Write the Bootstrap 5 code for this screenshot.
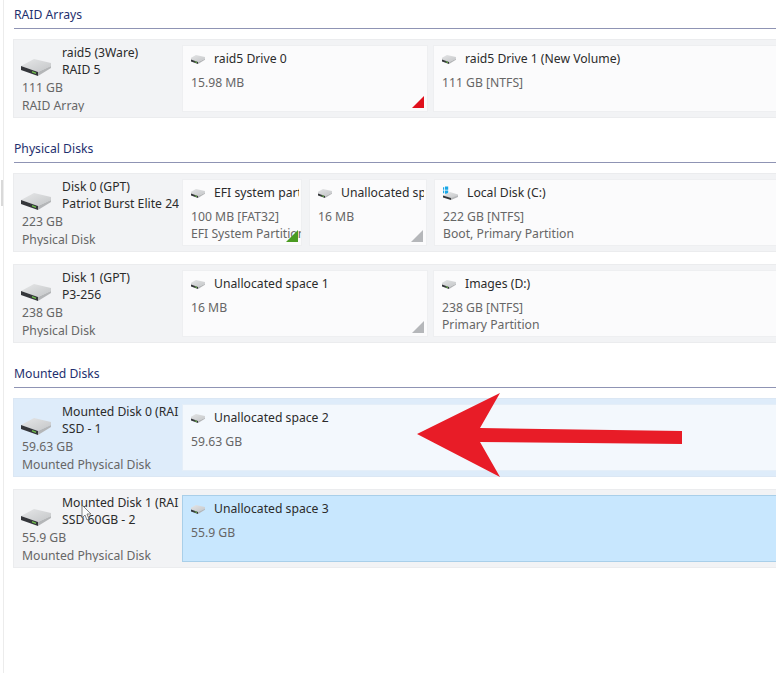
<!DOCTYPE html>
<html lang="en">
<head>
    <meta charset="UTF-8">
    <meta name="viewport" content="width=device-width, initial-scale=1.0">
    <title>Disk Management</title>
    <link href="https://cdn.jsdelivr.net/npm/bootstrap@5.3.0/dist/css/bootstrap.min.css" rel="stylesheet">
    <style>
        html, body { height: 100%; overflow: hidden; }
        body {
            background-color: #fff;
            font-family: "Noto Sans", "Open Sans", sans-serif;
            font-size: 12.2px;
            line-height: 17.5px;
            color: #2b2b2b;
        }
        .page-wrap {
            position: relative;
            min-height: 673px;
            margin-left: 3px;
            padding: 5px 0 0 9px;
            border-left: 1px solid #ececec;
        }
        .side-tab {
            position: absolute;
            left: -3px;
            top: 180px;
            width: 2px;
            height: 26px;
            background: #d9d9d9;
        }
        .sec-head {
            height: 24px;
            padding-top: 1px;
            margin-bottom: 10px;
            margin-left: 1px;
            color: #1e2f6e;
            border-bottom: 1px solid #8f94b4;
        }
        .sec-block { margin-bottom: 21px; }
        .sec-gap { margin-top: 21px; }
        .disk-row {
            height: 79px;
            margin-bottom: 12px;
            padding: 5px 0;
            background: #f2f3f5;
            border: 1px solid #ebecee;
            border-right: 0;
        }
        .disk-row.is-hover { background: #deecfa; border-color: #dbe7f4; }
        .disk-info { width: 165px; margin-right: 3px; flex: none; overflow: hidden; white-space: nowrap; }
        .info-top { height: 35px; margin-top: -1px; line-height: 17px; }
        .info-icon { width: 48px; flex: none; padding: 14px 0 0 7px; }
        .info-sub { padding-left: 8px; color: #666; }
        .tile {
            position: relative;
            flex: none;
            overflow: hidden;
            white-space: nowrap;
            background: #fbfbfc;
            border: 1px solid #eeeff1;
            padding: 1px 0 0 8px;
        }
        .tile.w-half { width: 246px; }
        .tile.w-half2 { width: 118px; }
        .tile.w-narrow { width: 120px; }
        .tile.w-rest { flex: 1 1 auto; border-right: 0; }
        .tile.is-hover { background: #f3f8fd; border-color: #e4eef8; }
        .tile.is-picked { background: #c8e7fe; border-color: #a9cfe9; }
        .tile-name { height: 24px; margin-bottom: 3px; margin-right: 2px; overflow: hidden; }
        .tile-name svg { margin-left: -2px; margin-right: 9px; flex: none; }
        .tile-name svg.win-icon { margin-right: 8px; }
        .tile-sub { color: #666; line-height: 17px; }
        .tiles-five { gap: 5px; }
        .tiles-seven { gap: 7px; }
        .corner { position: absolute; right: 3px; bottom: 3px; width: 12px; height: 12px; clip-path: polygon(100% 0, 100% 100%, 0 100%); }
        .corner-red { background: #e0101c; }
        .corner-green { background: #4b9b22; }
        .corner-grey { background: #b5b7ba; }
        .red-arrow { position: absolute; left: 413px; top: 393px; }
        .mouse-ptr { position: absolute; left: 77px; top: 504px; }
    </style>
</head>
<body>

<svg width="0" height="0" class="d-block position-absolute">
    <defs>
        <linearGradient id="hddTop" x1="0" y1="0" x2="1" y2="1">
            <stop offset="0" stop-color="#e6e7e8"/>
            <stop offset="1" stop-color="#c4c6c8"/>
        </linearGradient>
        <symbol id="hdd" viewBox="0 0 30 17">
            <path d="M0 7 L13 0 L30 4 L30 7 L17 13 Z" fill="url(#hddTop)"/>
            <path d="M0 7 L17 13 L17 17 L0 11 Z" fill="#34363a"/>
            <path d="M17 13 L30 7 L30 9 L17 17 Z" fill="#b4b6b8"/>
            <path d="M11 12 L15 13.4 L15 15 L11 13.6 Z" fill="#6dbb4a"/>
        </symbol>
    </defs>
</svg>

<div class="page-wrap">
    <div class="side-tab"></div>

    <section class="sec-block">
        <div class="sec-head">RAID Arrays</div>
        <div class="disk-row d-flex">
            <div class="disk-info">
                <div class="info-top d-flex">
                    <div class="info-icon"><svg width="30" height="17"><use href="#hdd"/></svg></div>
                    <div>raid5 (3Ware)<br>RAID 5</div>
                </div>
                <div class="info-sub">111 GB<br>RAID Array</div>
            </div>
            <div class="d-flex flex-grow-1 tiles-five">
                <div class="tile w-half">
                    <div class="tile-name d-flex align-items-center"><svg width="16" height="9"><use href="#hdd"/></svg>raid5 Drive 0</div>
                    <div class="tile-sub">15.98 MB</div>
                    <div class="corner corner-red"></div>
                </div>
                <div class="tile w-rest">
                    <div class="tile-name d-flex align-items-center"><svg width="16" height="9"><use href="#hdd"/></svg>raid5 Drive 1 (New Volume)</div>
                    <div class="tile-sub">111 GB [NTFS]</div>
                </div>
            </div>
        </div>
    </section>

    <section>
        <div class="sec-head">Physical Disks</div>
        <div class="disk-row d-flex">
            <div class="disk-info">
                <div class="info-top d-flex">
                    <div class="info-icon"><svg width="30" height="17"><use href="#hdd"/></svg></div>
                    <div>Disk 0 (GPT)<br>Patriot Burst Elite 240GB</div>
                </div>
                <div class="info-sub">223 GB<br>Physical Disk</div>
            </div>
            <div class="d-flex flex-grow-1 tiles-seven">
                <div class="tile w-narrow">
                    <div class="tile-name d-flex align-items-center"><svg width="16" height="9"><use href="#hdd"/></svg>EFI system partition</div>
                    <div class="tile-sub">100 MB [FAT32]<br>EFI System Partition</div>
                    <div class="corner corner-green"></div>
                </div>
                <div class="tile w-half2">
                    <div class="tile-name d-flex align-items-center"><svg width="16" height="9"><use href="#hdd"/></svg>Unallocated space</div>
                    <div class="tile-sub">16 MB</div>
                    <div class="corner corner-grey"></div>
                </div>
                <div class="tile w-rest">
                    <div class="tile-name d-flex align-items-center">
                        <svg class="win-icon" width="18" height="14" viewBox="0 0 18 14">
                            <path d="M0 1.2h3.2v2.6H0zM4 .6h3.2v3.2H4zM0 4.6h3.2v2.6H0zM4 4.6h3.2v3.2H4z" fill="#19a7e6"/>
                            <path d="M2 9.5 L9 6 L17 8.5 L17 10 L10 12.5 Z" fill="url(#hddTop)"/>
                            <path d="M2 9.5 L10 12 L10 14 L2 11.5 Z" fill="#34363a"/>
                            <path d="M10 12 L17 9.5 L17 11 L10 14 Z" fill="#b4b6b8"/>
                        </svg>Local Disk (C:)</div>
                    <div class="tile-sub">222 GB [NTFS]<br>Boot, Primary Partition</div>
                </div>
            </div>
        </div>
        <div class="disk-row d-flex">
            <div class="disk-info">
                <div class="info-top d-flex">
                    <div class="info-icon"><svg width="30" height="17"><use href="#hdd"/></svg></div>
                    <div>Disk 1 (GPT)<br>P3-256</div>
                </div>
                <div class="info-sub">238 GB<br>Physical Disk</div>
            </div>
            <div class="d-flex flex-grow-1 tiles-five">
                <div class="tile w-half">
                    <div class="tile-name d-flex align-items-center"><svg width="16" height="9"><use href="#hdd"/></svg>Unallocated space 1</div>
                    <div class="tile-sub">16 MB</div>
                    <div class="corner corner-grey"></div>
                </div>
                <div class="tile w-rest">
                    <div class="tile-name d-flex align-items-center"><svg width="16" height="9"><use href="#hdd"/></svg>Images (D:)</div>
                    <div class="tile-sub">238 GB [NTFS]<br>Primary Partition</div>
                </div>
            </div>
        </div>
    </section>

    <section>
        <div class="sec-head sec-gap">Mounted Disks</div>
        <div class="disk-row is-hover d-flex">
            <div class="disk-info">
                <div class="info-top d-flex">
                    <div class="info-icon"><svg width="30" height="17"><use href="#hdd"/></svg></div>
                    <div>Mounted Disk 0 (RAID)<br>SSD - 1</div>
                </div>
                <div class="info-sub">59.63 GB<br>Mounted Physical Disk</div>
            </div>
            <div class="d-flex flex-grow-1">
                <div class="tile is-hover w-rest">
                    <div class="tile-name d-flex align-items-center"><svg width="16" height="9"><use href="#hdd"/></svg>Unallocated space 2</div>
                    <div class="tile-sub">59.63 GB</div>
                </div>
            </div>
        </div>
        <div class="disk-row d-flex">
            <div class="disk-info">
                <div class="info-top d-flex">
                    <div class="info-icon"><svg width="30" height="17"><use href="#hdd"/></svg></div>
                    <div>Mounted Disk 1 (RAID)<br>SSD 60GB - 2</div>
                </div>
                <div class="info-sub">55.9 GB<br>Mounted Physical Disk</div>
            </div>
            <div class="d-flex flex-grow-1">
                <div class="tile is-picked w-rest">
                    <div class="tile-name d-flex align-items-center"><svg width="16" height="9"><use href="#hdd"/></svg>Unallocated space 3</div>
                    <div class="tile-sub">55.9 GB</div>
                </div>
            </div>
        </div>
    </section>
</div>

<svg class="red-arrow" width="272" height="86" viewBox="413 393 272 86">
    <path d="M417 434 L500 393 L480 428 L682 431 L682 444 L480 442 L500 477 Z" fill="#e81c27"/>
</svg>
<svg class="mouse-ptr" width="14" height="20" viewBox="0 0 14 20">
    <path d="M5 1 L5 14 L8 11 L10 16 L12 15 L10 10 L14 10 Z" fill="#fff" fill-opacity="0.7" stroke="#666" stroke-width="0.8"/>
</svg>

<script src="https://cdn.jsdelivr.net/npm/bootstrap@5.3.0/dist/js/bootstrap.bundle.min.js"></script>
</body>
</html>
